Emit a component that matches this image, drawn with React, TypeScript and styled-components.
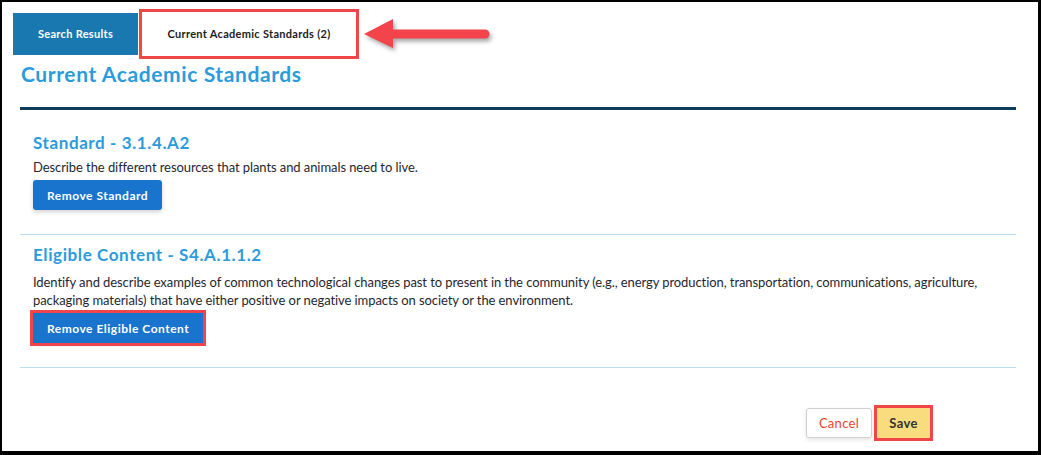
import React from 'react';
import styled, { createGlobalStyle, css } from 'styled-components';

const GlobalStyle = createGlobalStyle`
	html, body {
		margin: 0;
		padding: 0;
		background: #ffffff;
	}
	* {
		box-sizing: border-box;
	}
`;

const flagged = css`
	outline: 3px solid #f0464a;
	outline-offset: 0;
	border-radius: 0;
`;

type Standard = {
	id: string;
	title: string;
	description: string;
	action: string;
	flagged?: boolean;
};

const standards: Standard[] = [
	{
		id: 'std',
		title: 'Standard - 3.1.4.A2',
		description:
			'Describe the different resources that plants and animals need to live.',
		action: 'Remove Standard',
	},
	{
		id: 'ec',
		title: 'Eligible Content - S4.A.1.1.2',
		description:
			'Identify and describe examples of common technological changes past to present in the community (e.g., energy production, transportation, communications, agriculture, packaging materials) that have either positive or negative impacts on society or the environment.',
		action: 'Remove Eligible Content',
		flagged: true,
	},
];

function PointerArrow() {
	return (
		<ArrowWrap>
			<svg width="134" height="42" viewBox="0 0 134 42">
				<line
					x1="32"
					y1="20"
					x2="125"
					y2="20"
					stroke="#f2444a"
					strokeWidth="9"
					strokeLinecap="round"
				/>
				<polygon points="4,20 33,5 33,34" fill="#f2444a" />
			</svg>
		</ArrowWrap>
	);
}

export default function App() {
	return (
		<>
			<GlobalStyle />
			<Frame>
				<TabBar>
					<Tab>Search Results</Tab>
					<Tab $active $flagged>
						Current Academic Standards (2)
					</Tab>
				</TabBar>
				<PointerArrow />
				<Panel>
					<PageTitle>Current Academic Standards</PageTitle>
					<HeavyRule />
					{standards.map((item, i) => (
						<Section key={item.id} $first={i === 0}>
							<SectionTitle>{item.title}</SectionTitle>
							<Description $gap={i === 0 ? 5 : 8}>{item.description}</Description>
							<RemoveButton $flagged={item.flagged}>{item.action}</RemoveButton>
						</Section>
					))}
					<Footer>
						<CancelButton>Cancel</CancelButton>
						<SaveButton>Save</SaveButton>
					</Footer>
				</Panel>
			</Frame>
		</>
	);
}

const Frame = styled.div`
	position: relative;
	width: 1041px;
	height: 455px;
	border-style: solid;
	border-color: #000000;
	border-width: 2px 3px 4px 2px;
	background: #ffffff;
	font-family: Lato, 'Liberation Sans', sans-serif;
	overflow: hidden;
`;

const TabBar = styled.div`
	display: flex;
	align-items: center;
	height: 44px;
	margin: 10px 0 0 11px;
`;

const Tab = styled.div<{ $active?: boolean; $flagged?: boolean }>`
	display: flex;
	align-items: center;
	justify-content: center;
	height: 42px;
	width: 125px;
	padding-bottom: 2px;
	background: #1a78b1;
	color: #ffffff;
	font-size: 11px;
	font-weight: 700;
	letter-spacing: 0.3px;

	${({ $active }) =>
		$active &&
		css`
			width: 214px;
			height: 44px;
			margin-left: 4px;
			background: #ffffff;
			color: #1c1c1c;
		`}

	${({ $flagged }) => $flagged && flagged}
`;

const ArrowWrap = styled.div`
	position: absolute;
	left: 358px;
	top: 12px;
	filter: drop-shadow(2px 3px 2px rgba(0, 0, 0, 0.35));
`;

const Panel = styled.div`
	padding: 0 22px 0 18px;
`;

const PageTitle = styled.h1`
	margin: 6px 0 0 1px;
	font-size: 21px;
	line-height: 24px;
	font-weight: 700;
	letter-spacing: 0.6px;
	color: #2b9bdc;
`;

const HeavyRule = styled.div`
	height: 3px;
	margin-top: 21px;
	background: #0f3c56;
`;

const Section = styled.section<{ $first?: boolean }>`
	display: flex;
	flex-direction: column;
	align-items: flex-start;
	padding: ${({ $first }) => ($first ? '23px' : '10px')} 12px 24px 13px;
	border-bottom: 1px solid #b9ddf1;
`;

const SectionTitle = styled.h2`
	margin: 0;
	font-size: 17px;
	line-height: 20px;
	font-weight: 700;
	letter-spacing: 0.6px;
	color: #2b9bdc;
`;

const Description = styled.p<{ $gap: number }>`
	margin: ${({ $gap }) => $gap}px 0 0;
	font-size: 13px;
	line-height: 18px;
	letter-spacing: -0.08px;
	color: #1f2730;
`;

const RemoveButton = styled.button<{ $flagged?: boolean }>`
	margin-top: 4px;
	height: 30px;
	padding: 0 14px;
	border: none;
	border-radius: 3px;
	background: #1874cd;
	color: #ffffff;
	font-family: inherit;
	font-size: 12px;
	font-weight: 700;
	letter-spacing: 0.5px;
	box-shadow: 0 2px 4px rgba(0, 0, 0, 0.18);

	${({ $flagged }) => $flagged && flagged}
`;

const Footer = styled.div`
	display: flex;
	justify-content: flex-end;
	gap: 5px;
	margin-top: 40px;
	padding-right: 86px;
`;

const CancelButton = styled.button`
	height: 30px;
	width: 66px;
	border: 1px solid #cfcfcf;
	border-radius: 3px;
	background: #ffffff;
	color: #e8452c;
	font-family: inherit;
	font-size: 13px;
	letter-spacing: 0.3px;
	box-shadow: 0 2px 4px rgba(0, 0, 0, 0.1);
`;

const SaveButton = styled.button`
	height: 30px;
	width: 53px;
	border: none;
	background: #f9dc7e;
	color: #333333;
	font-family: inherit;
	font-size: 13px;
	font-weight: 700;
	letter-spacing: 0.3px;
	${flagged}
`;
